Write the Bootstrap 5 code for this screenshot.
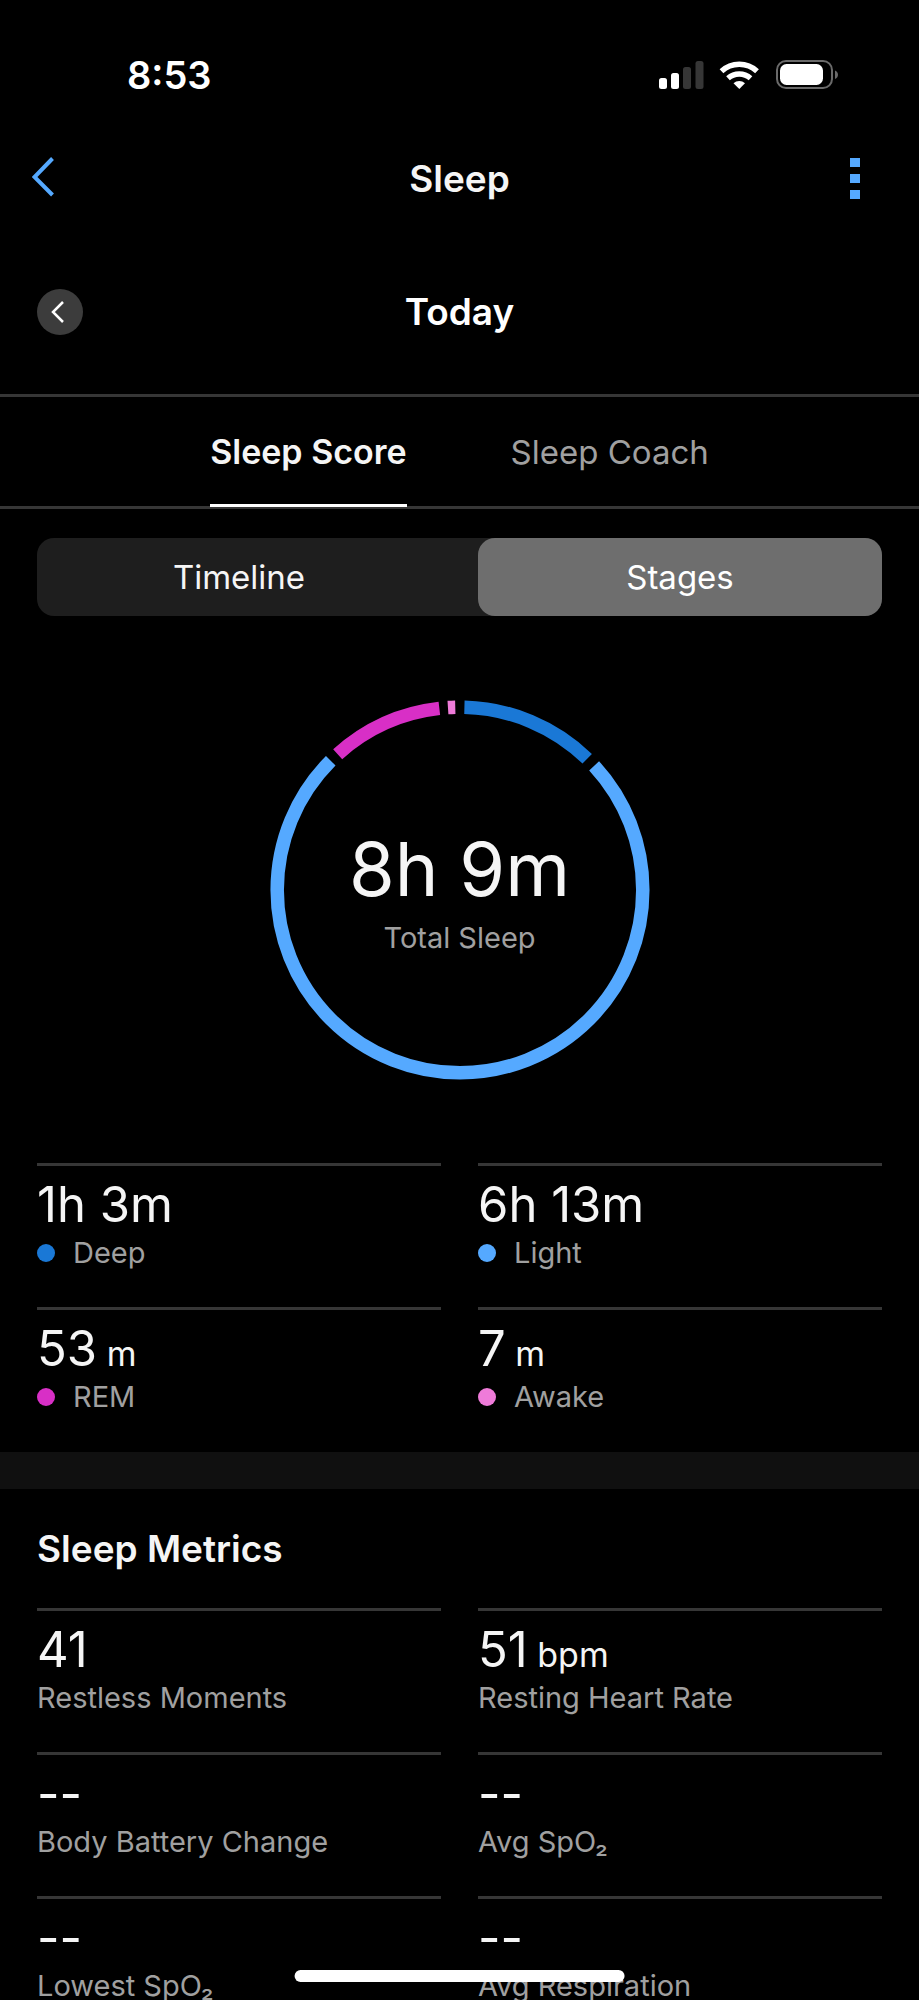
<!DOCTYPE html>
<html lang="en">
<head>
<meta charset="utf-8">
<meta name="viewport" content="width=device-width, initial-scale=1">
<title>Sleep</title>
<link href="https://cdn.jsdelivr.net/npm/bootstrap@5.3.0/dist/css/bootstrap.min.css" rel="stylesheet">
<style>
  :root {
    --line: #363636;
    --muted: #a0a0a0;
    --accent: #55a9ff;
    --deep: #1a78d6;
    --light: #55a9ff;
    --rem: #d82fc6;
    --awake: #ef7bd9;
    --side: 37px;
  }
  body { background: #000; color: #f5f5f5; font-family: Inter, "Liberation Sans", sans-serif; }
  .scroll-area { scrollbar-width: none; }
  .scroll-area::-webkit-scrollbar { display: none; }

  .status-bar { padding: 51px 81px 51px 127px; font-size: 38px; line-height: 48px; color: #fff; }
  .three-col { display: grid; grid-template-columns: 1fr auto 1fr; align-items: center; }
  .top-bar { height: 58px; }
  .top-bar .btn, .date-bar .btn { padding: 0; border: 0; line-height: 0; }
  .btn-back { margin-left: 32px; }
  .btn-more { margin-right: 59px; }
  .page-title { font-size: 37px; line-height: 58px; }
  .date-bar { padding: 80px var(--side) 58px; }
  .date-bar .page-title { line-height: 48px; color: #fff; }
  .round-btn { width: 46px; height: 46px; background: #3c3c3c; }

  .tab-strip { border-top: 3px solid var(--line); border-bottom: 3px solid var(--line); gap: 104px; }
  .tab-strip .nav-link { padding: 32px 0 29px; margin-bottom: -1px; font-size: 33px; line-height: 46px; color: var(--muted); border-bottom: 3px solid transparent; }
  .tab-strip .nav-link.active { color: #f5f5f5; font-size: 34px; font-weight: 600; border-bottom-color: #fff; }

  .inset { padding-left: var(--side); padding-right: var(--side); }
  .segmented { margin-top: 29px; background: #1e1e1e; border-radius: 17px; display: grid; grid-template-columns: 1fr 1fr; column-gap: var(--side); }
  .segmented label { font-size: 33px; line-height: 78px; text-align: center; border-radius: 17px; cursor: pointer; }
  .segmented .btn-check:checked + label { background: #6e6e6e; color: #fff; }

  .donut { margin: 84px auto 83px; width: 380px; }
  .donut-text { inset: 0; gap: 6px; }
  .total-value { font-size: 74px; line-height: 90px; }
  .soft { color: var(--muted); font-size: 29px; line-height: 36px; }

  .stat-grid { display: grid; grid-template-columns: 1fr 1fr; column-gap: var(--side); }
  .stat-cell { border-top: 3px solid var(--line); padding: 9px 0 36px; }
  .stat-value { font-size: 49px; line-height: 60px; }
  .stat-unit { font-size: 34px; line-height: 1; }
  .dot { width: 18px; height: 18px; margin-right: 18px; }
  .dot-deep { background: var(--deep); }
  .dot-light { background: var(--light); }
  .dot-rem { background: var(--rem); }
  .dot-awake { background: var(--awake); }
  .section-band { height: 37px; margin-top: 1px; background: #101010; }
  .section-title { font-size: 37px; line-height: 48px; padding-top: 36px; padding-bottom: 35px; }
  .home-bar { width: 36%; height: 12px; bottom: 18px; background: #fff; }
</style>
</head>
<body>
<div class="vh-100 d-flex flex-column position-relative overflow-hidden">
  <div class="status-bar d-flex justify-content-between align-items-center fw-semibold">
    <span>8:53</span>
    <span class="d-flex align-items-center">
      <svg width="180" height="32" viewBox="0 0 180 32" aria-hidden="true">
        <rect x="1" y="19" width="8" height="11" rx="2.5" fill="#fff"/>
        <rect x="13" y="14" width="8" height="16" rx="2.5" fill="#fff"/>
        <rect x="25" y="8" width="8" height="22" rx="2.5" fill="#363636"/>
        <rect x="37.5" y="2" width="8" height="28" rx="2.5" fill="#363636"/>
        <g fill="none" stroke="#fff" stroke-width="5.5">
          <path d="M63.500 12.300a26 26 0 0 1 35.500 0"/>
          <path d="M70 19.300a17 17 0 0 1 22.500 0"/>
        </g>
        <path d="M75.500 24.300a8.500 8.500 0 0 1 11.500 0L81.300 30z" fill="#fff"/>
        <rect x="119" y="2" width="55" height="27" rx="9" fill="none" stroke="#6a6a6a" stroke-width="2"/>
        <rect x="122" y="5" width="43" height="21" rx="6.5" fill="#fff"/>
        <path d="M177 11.500c4 1.500 4 7 0 8.500z" fill="#6a6a6a"/>
      </svg>
    </span>
  </div>

  <header class="top-bar three-col">
    <div>
      <button type="button" class="btn btn-back" aria-label="Back">
        <svg width="24" height="44" viewBox="0 0 24 44" fill="none" stroke="#55a9ff" stroke-width="4" aria-hidden="true"><path d="M20.500 1.500 2.500 20l18 18"/></svg>
      </button>
    </div>
    <h1 class="page-title fw-semibold m-0">Sleep</h1>
    <div class="text-end">
      <button type="button" class="btn btn-more" aria-label="More options">
        <svg width="10" height="42" viewBox="0 0 10 42" fill="#55a9ff" aria-hidden="true"><path d="M0 0h10v9H0zM0 16h10v9H0zM0 32h10v9H0z"/></svg>
      </button>
    </div>
  </header>

  <main class="scroll-area flex-grow-1 overflow-auto">
    <div class="date-bar three-col">
      <div>
        <button type="button" class="btn round-btn rounded-circle" aria-label="Previous day">
          <svg width="46" height="46" viewBox="0 0 46 46" fill="none" stroke="#fff" stroke-width="2.5" aria-hidden="true"><path d="M26 13 16 23l10 10"/></svg>
        </button>
      </div>
      <h2 class="page-title fw-semibold m-0">Today</h2>
      <span></span>
    </div>

    <nav class="tab-strip nav justify-content-center" aria-label="Sleep views">
      <a class="nav-link active" aria-current="page" href="#score">Sleep Score</a>
      <a class="nav-link" href="#coach">Sleep Coach</a>
    </nav>

    <section id="score" class="inset">
      <div class="segmented" role="group" aria-label="Chart type">
        <div class="d-grid">
          <input type="radio" class="btn-check" name="chart" id="timeline">
          <label for="timeline">Timeline</label>
        </div>
        <div class="d-grid">
          <input type="radio" class="btn-check" name="chart" id="stages" checked>
          <label for="stages">Stages</label>
        </div>
      </div>

      <div class="donut position-relative">
        <svg class="d-block w-100" viewBox="0 0 380 380" role="img" aria-label="Sleep stages">
          <!-- One unit of dash length is one degree, clockwise from the top -->
          <g fill="none" stroke-width="13.5" transform="rotate(-90 190 190)">
            <circle cx="190" cy="190" r="182.8" pathLength="360" stroke="#1a78d6" stroke-dasharray="42.7 317.3" stroke-dashoffset="-1.4"/>
            <circle cx="190" cy="190" r="182.8" pathLength="360" stroke="#55a9ff" stroke-dasharray="267.8 92.2" stroke-dashoffset="-47.2"/>
            <circle cx="190" cy="190" r="182.8" pathLength="360" stroke="#d82fc6" stroke-dasharray="35.5 324.5" stroke-dashoffset="-318"/>
            <circle cx="190" cy="190" r="182.8" pathLength="360" stroke="#ef7bd9" stroke-dasharray="2.3 357.7" stroke-dashoffset="-356.2"/>
          </g>
        </svg>
        <div class="donut-text position-absolute d-flex flex-column align-items-center justify-content-center">
          <div class="total-value">8h 9m</div>
          <div class="soft">Total Sleep</div>
        </div>
      </div>

      <div class="stat-grid">
        <div class="stat-cell">
          <div class="stat-value">1h 3m</div>
          <div class="soft d-flex align-items-center"><span class="dot dot-deep rounded-circle"></span>Deep</div>
        </div>
        <div class="stat-cell">
          <div class="stat-value">6h 13m</div>
          <div class="soft d-flex align-items-center"><span class="dot dot-light rounded-circle"></span>Light</div>
        </div>
        <div class="stat-cell">
          <div class="stat-value">53<span class="stat-unit"> m</span></div>
          <div class="soft d-flex align-items-center"><span class="dot dot-rem rounded-circle"></span>REM</div>
        </div>
        <div class="stat-cell">
          <div class="stat-value">7<span class="stat-unit"> m</span></div>
          <div class="soft d-flex align-items-center"><span class="dot dot-awake rounded-circle"></span>Awake</div>
        </div>
      </div>
    </section>

    <div class="section-band"></div>

    <section class="inset">
      <h2 class="section-title fw-semibold m-0">Sleep Metrics</h2>
      <div class="stat-grid">
        <div class="stat-cell">
          <div class="stat-value">41</div>
          <div class="soft">Restless Moments</div>
        </div>
        <div class="stat-cell">
          <div class="stat-value">51<span class="stat-unit"> bpm</span></div>
          <div class="soft">Resting Heart Rate</div>
        </div>
        <div class="stat-cell">
          <div class="stat-value">--</div>
          <div class="soft">Body Battery Change</div>
        </div>
        <div class="stat-cell">
          <div class="stat-value">--</div>
          <div class="soft">Avg SpO₂</div>
        </div>
        <div class="stat-cell">
          <div class="stat-value">--</div>
          <div class="soft">Lowest SpO₂</div>
        </div>
        <div class="stat-cell">
          <div class="stat-value">--</div>
          <div class="soft">Avg Respiration</div>
        </div>
      </div>
    </section>
  </main>

  <div class="home-bar position-absolute start-50 translate-middle-x rounded-pill"></div>
</div>
<script src="https://cdn.jsdelivr.net/npm/bootstrap@5.3.0/dist/js/bootstrap.bundle.min.js"></script>
</body>
</html>
